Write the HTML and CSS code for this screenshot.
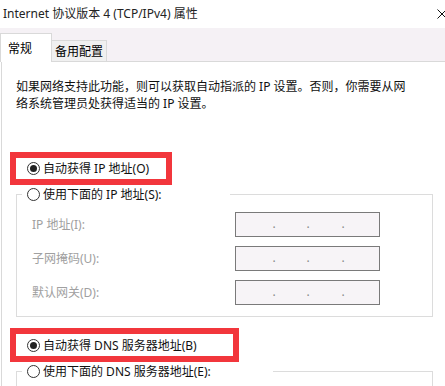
FILE: index.html
```html
<!DOCTYPE html>
<html lang="zh-CN">
<head>
    <meta charset="UTF-8">
    <meta name="viewport" content="width=device-width, initial-scale=1.0">
    <title>Internet 协议版本 4 (TCP/IPv4) 属性</title>
    <link rel="stylesheet" href="styles.css">
</head>
<body>

    <div class="titlebar">
        <span class="title">Internet 协议版本 4 (TCP/IPv4) 属性</span>
        <svg class="close" width="10" height="10" viewBox="0 0 10 10">
            <path d="M0.5 0.5L9.5 9.5M9.5 0.5L0.5 9.5" stroke="#111" stroke-width="1" fill="none"/>
        </svg>
    </div>

    <div class="tabs">
        <div class="tab active">常规</div>
        <div class="tab">备用配置</div>
    </div>

    <div class="panel">
        <p class="intro">如果网络支持此功能，则可以获取自动指派的 IP 设置。否则，你需要从网络系统管理员处获得适当的 IP 设置。</p>

        <div class="mark mark-ip">
            <div class="radio-row"><span class="radio checked"></span>自动获得 IP 地址(O)</div>
        </div>

        <fieldset class="group">
            <legend class="group-title ip-title"><span class="radio"></span>使用下面的 IP 地址(S):</legend>
            <div class="fields">
                <div class="field">
                    <span class="field-label">IP 地址(I):</span>
                    <span class="ipbox"><span class="seg1"></span><span class="dot">.</span><span class="seg2"></span><span class="dot">.</span><span class="seg3"></span><span class="dot">.</span></span>
                </div>
                <div class="field">
                    <span class="field-label">子网掩码(U):</span>
                    <span class="ipbox"><span class="seg1"></span><span class="dot">.</span><span class="seg2"></span><span class="dot">.</span><span class="seg3"></span><span class="dot">.</span></span>
                </div>
                <div class="field">
                    <span class="field-label">默认网关(D):</span>
                    <span class="ipbox"><span class="seg1"></span><span class="dot">.</span><span class="seg2"></span><span class="dot">.</span><span class="seg3"></span><span class="dot">.</span></span>
                </div>
            </div>
        </fieldset>

        <div class="mark mark-dns">
            <div class="radio-row"><span class="radio checked"></span>自动获得 DNS 服务器地址(B)</div>
        </div>

        <fieldset class="group group-dns">
            <legend class="group-title dns-title"><span class="radio"></span>使用下面的 DNS 服务器地址(E):</legend>
            <div class="fields"></div>
        </fieldset>
    </div>

</body>
</html>
```

FILE: styles.css
```css
html, body { margin: 0; padding: 0; }
body { width: 445px; height: 386px; overflow: hidden; background: #fff; color: #111; font-family: "Noto Sans", "Noto Sans CJK SC", sans-serif; font-size: 12px; line-height: 17px; }

.titlebar { height: 28px; display: flex; align-items: center; justify-content: space-between; padding-left: 3px; padding-bottom: 1px; box-sizing: border-box; background: #fff; }
.title { color: #222; }
.close { margin-right: -2px; }

.tabs { height: 34px; box-sizing: border-box; display: flex; align-items: flex-end; background: #f5f1f5; border-bottom: 1px solid #d9d9d9; }
.tab { box-sizing: border-box; border: 1px solid #d9d9d9; border-bottom: none; color: #000; }
.tab.active { width: 52px; height: 29px; margin-bottom: -1px; padding: 6px 0 0 7px; background: #fff; }
.tab:not(.active) { width: 56px; height: 21px; margin-left: -1px; padding-top: 2px; text-align: center; background: #f0f0f0; }

.panel { height: 324px; box-sizing: border-box; overflow: hidden; margin-left: 1px; padding: 16px 0 0 8px; border-left: 1px solid #d9d9d9; background: #fff; }
.intro { width: 396px; margin: 0 0 0 6px; color: #111; }

.mark { box-sizing: border-box; border: 6px solid #f2363c; }
.mark-ip { width: 162px; height: 33px; margin-top: 40px; }
.mark-dns { width: 229px; height: 34px; margin-top: 11px; }
.radio-row { height: 100%; display: flex; align-items: center; padding-left: 11px; }

.radio { position: relative; width: 13px; height: 13px; box-sizing: border-box; border: 1px solid #333; border-radius: 50%; background: #fff; margin-right: 3px; flex-shrink: 0; }
.radio.checked::after { content: ""; position: absolute; left: 2px; top: 2px; width: 7px; height: 7px; border-radius: 50%; background: #222; }

.group { box-sizing: border-box; width: 417px; margin: 1px 0 0 6px; padding: 0; border: 1px solid #dcdcdc; min-inline-size: 0; }
.group-title { box-sizing: border-box; height: 16px; margin-left: 5px; padding: 0 0 0 5px; display: flex; align-items: center; color: #111; }
.ip-title { width: 208px; }
.dns-title { width: 251px; }
.group-dns { height: 40px; }

.fields { display: flex; flex-direction: column; gap: 9px; padding: 10px 0 11px 15px; }
.field { display: flex; align-items: center; height: 25px; }
.field-label { width: 203px; color: #a0a0a0; }

.ipbox { display: flex; width: 145px; height: 25px; box-sizing: border-box; border: 1px solid #7a7a7a; background: #f7f4f7; color: #8a8a8a; line-height: 22px; }
.seg1 { width: 36px; }
.seg2 { width: 30px; }
.seg3 { width: 31px; }
.dot { width: 4px; text-align: center; }
```
